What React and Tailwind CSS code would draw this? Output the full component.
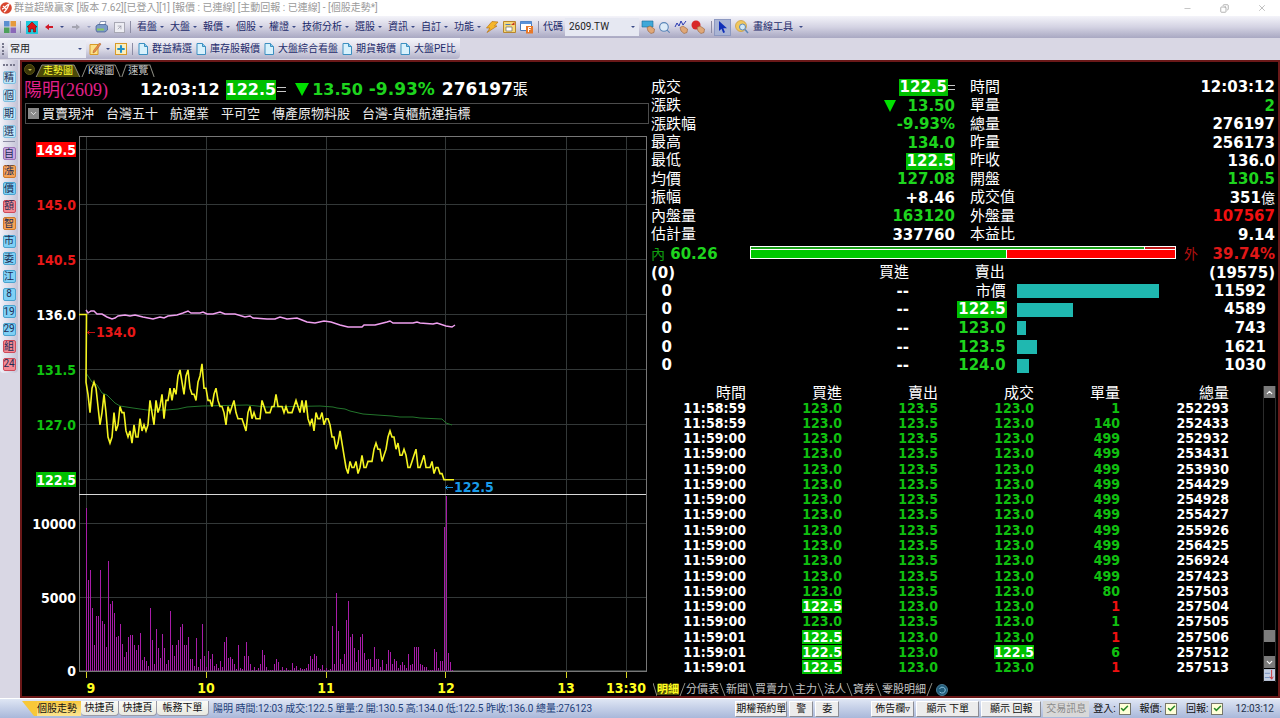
/**
 * App.jsx
 * ────────────────────────────────
 * Stock desktop: toolbars, intraday chart, quote panel, tick list.
 */

import {
  ArrowRight,
  Check,
  ChevronDown,
  ChevronUp,
  Copy,
  Minus,
  Plus,
  Search,
  X,
} from 'lucide-react'

const UI = "font-['Roboto','Noto_Sans_CJK_TC',sans-serif]"
const WIDE = "font-['DejaVu_Sans','Noto_Sans_CJK_TC',sans-serif] font-bold"
const NARROW = "font-['DejaVu_Sans_Condensed','Noto_Sans_CJK_TC',sans-serif] font-bold"
const HIT = 'bg-[#00c000] text-white'

/* ── Data ─────────────────────────────────────────────── */

// one price per minute from 09:00
const PRICES = [
  130.5, 129.5, 128, 130, 130.5, 130, 128.5, 127, 128, 129.5, 128, 126, 125.5, 126, 128, 126.5, 127, 128.5, 128, 128,
  126.5, 126, 126.5, 125.5, 127, 126, 126, 127.5, 126.5, 127, 126.5, 127, 129, 128, 127, 129, 128, 128.5, 129.5, 127.5,
  129, 129, 130, 129, 130, 129.5, 131, 131.5, 130.5, 129.5, 131, 131.5, 130, 129.5, 129.5, 129, 130.5, 131, 132, 130,
  130, 129, 129, 128.5, 129.5, 130, 129, 128.5, 128.5, 128, 127, 128.5, 128, 128.5, 129, 128, 127.5, 127.5, 127.5, 127,
  126.5, 128, 128.5, 127.5, 128, 127.5, 127.5, 127.5, 129, 128.5, 128, 128, 128, 128.5, 128.5, 129.5, 128.5, 128.5, 128.5, 128,
  128.5, 128, 128, 128, 128.5, 129, 128.5, 128, 129, 128, 129, 127.5, 127, 127.5, 126.5, 128, 127.5, 127.5, 128, 127,
  127.5, 127.5, 127, 126, 126, 125, 125.5, 126.5, 125.5, 124.5, 123.5, 123, 124, 123.5, 123.5, 124, 123, 123.5, 124.5, 123.5,
  123.5, 124, 124, 124, 125, 125.5, 125, 125, 124, 124.5, 125, 126, 126.5, 126, 126, 125, 125.5, 124.5, 124.5, 125,
  124.5, 123.5, 123.5, 124, 124.5, 125, 123.5, 123.5, 124, 124.5, 123.5, 123.5, 123.5, 124, 123, 123.5, 123.5, 123, 123, 122.5,
  122.5, 122.5, 122.5, 122.5, 122.5,
]

const VOLUMES = [
  11100, 6200, 6900, 4300, 1800, 3750, 3750, 6900, 3400, 3200, 1650, 7500, 4550, 4800, 3950, 2350, 2400, 3200, 1850, 950,
  1300, 2300, 2450, 2450, 1800, 1400, 1800, 2600, 750, 950, 700, 350, 4300, 2100, 500, 2900, 1600, 900, 2550, 1600,
  500, 750, 4100, 1750, 1000, 1800, 2100, 3000, 3200, 1800, 1800, 2300, 800, 800, 350, 2250, 300, 850, 3200, 1000,
  300, 1350, 850, 1150, 350, 500, 200, 700, 300, 1950, 2350, 900, 930, 800, 450, 150, 1750, 200, 150, 1000,
  2000, 1000, 450, 100, 250, 100, 200, 450, 1400, 1100, 300, 80, 80, 100, 500, 800, 600, 80, 300, 80,
  200, 100, 80, 550, 200, 350, 100, 200, 150, 150, 180, 450, 1000, 850, 1150, 1000, 200, 150, 400, 100,
  230, 100, 120, 3100, 450, 5330, 2700, 850, 500, 1150, 3500, 4800, 2300, 2550, 1600, 600, 1400, 2300, 2500, 1250,
  750, 800, 850, 300, 1650, 800, 800, 250, 750, 100, 450, 1450, 1300, 500, 800, 700, 200, 400, 600, 400,
  200, 1150, 400, 450, 1650, 1650, 1650, 500, 400, 250, 250, 80, 80, 100, 1500, 1300, 200, 700, 700, 9800,
  12000, 1250, 600, 100,
]

const INDEX_LINE =
  '86,310 88,313 91,311 94,311 97,314 102,314 107,317 112,319 115,318 118,316 125,315 130,316 135,315 143,317 153,319 160,317 164,318 168,316 177,315 183,313 188,311 191,313 200,313 203,312 207,314 213,314 220,312 225,314 235,314 245,317 250,316 253,318 267,319 275,319 280,317 287,319 297,318 302,320 307,322 315,323 324,321 331,322 340,325 348,327 362,327 364,325 375,325 387,322 390,321 393,323 413,323 417,322 420,323 433,324 437,323 446,326 452,327 455,325'

const AVERAGE_LINE =
  '86,373 92,382 97,385 102,393 107,395 115,403 120,406 133,408 147,410 167,410 178,409 187,407 202,406 247,405 267,407 320,406 333,407 337,408 345,409 350,411 363,414 377,415 392,416 400,417 413,417 420,418 442,419 446,423 452,425'

const QUOTE_LEFT = [
  { label: '成交', value: '122.5', hit: true, flat: true },
  { label: '漲跌', value: '13.50', tone: 'text-[#1ed41e]', down: true },
  { label: '漲跌幅', value: '-9.93%', tone: 'text-[#1ed41e]' },
  { label: '最高', value: '134.0', tone: 'text-[#1ed41e]' },
  { label: '最低', value: '122.5', hit: true },
  { label: '均價', value: '127.08', tone: 'text-[#1ed41e]' },
  { label: '振幅', value: '+8.46' },
  { label: '內盤量', value: '163120', tone: 'text-[#1ed41e]' },
  { label: '估計量', value: '337760' },
]

const QUOTE_RIGHT = [
  { label: '時間', value: '12:03:12' },
  { label: '單量', value: '2', tone: 'text-[#1ed41e]' },
  { label: '總量', value: '276197' },
  { label: '昨量', value: '256173' },
  { label: '昨收', value: '136.0' },
  { label: '開盤', value: '130.5', tone: 'text-[#1ed41e]' },
  { label: '成交值', value: '351', unit: '億' },
  { label: '外盤量', value: '107567', tone: 'text-[#f01010]' },
  { label: '本益比', value: '9.14' },
]

const ASKS = [
  { price: '市價', volume: 11592, tone: 'font-normal' },
  { price: '122.5', volume: 4589, tone: HIT },
  { price: '123.0', volume: 743, tone: 'text-[#1ed41e]' },
  { price: '123.5', volume: 1621, tone: 'text-[#1ed41e]' },
  { price: '124.0', volume: 1030, tone: 'text-[#1ed41e]' },
]

// time, bid, ask, deal, lot, total, lot is red
const TICKS = [
  ['11:58:59', '123.0', '123.5', '123.0', '1', '252293'],
  ['11:58:59', '123.0', '123.5', '123.0', '140', '252433'],
  ['11:59:00', '123.0', '123.5', '123.0', '499', '252932'],
  ['11:59:00', '123.0', '123.5', '123.0', '499', '253431'],
  ['11:59:00', '123.0', '123.5', '123.0', '499', '253930'],
  ['11:59:00', '123.0', '123.5', '123.0', '499', '254429'],
  ['11:59:00', '123.0', '123.5', '123.0', '499', '254928'],
  ['11:59:00', '123.0', '123.5', '123.0', '499', '255427'],
  ['11:59:00', '123.0', '123.5', '123.0', '499', '255926'],
  ['11:59:00', '123.0', '123.5', '123.0', '499', '256425'],
  ['11:59:00', '123.0', '123.5', '123.0', '499', '256924'],
  ['11:59:00', '123.0', '123.5', '123.0', '499', '257423'],
  ['11:59:00', '123.0', '123.5', '123.0', '80', '257503'],
  ['11:59:00', '122.5', '123.0', '123.0', '1', '257504', true],
  ['11:59:00', '123.0', '123.5', '123.0', '1', '257505'],
  ['11:59:01', '122.5', '123.0', '123.0', '1', '257506', true],
  ['11:59:01', '122.5', '123.0', '122.5', '6', '257512'],
  ['11:59:01', '122.5', '123.0', '123.0', '1', '257513', true],
]

const BLUE = 'bg-[#7fd0f5] border-[#4aa3cf]'
const PALE = 'bg-[#bfe6f8] border-[#7fbfe0]'
const RED = 'bg-[#f58a94] border-[#cf4a5a]'
const ORANGE = 'bg-[#f5a35a] border-[#cf7a2a]'
const PURPLE = 'bg-[#c9a8e0] border-[#9a72b8]'

const SIDE_TOP = ['精', '個', '期', '選']
const SIDE_BOTTOM = [
  ['自', PURPLE],
  ['漲', ORANGE],
  ['價', BLUE],
  ['額', RED],
  ['智', ORANGE],
  ['市', BLUE],
  ['委', BLUE],
  ['江', BLUE],
  ['8', BLUE],
  ['19', BLUE],
  ['29', BLUE],
  ['組', RED],
  ['24', RED],
]

/* ── Small parts ──────────────────────────────────────── */

function Caret({ className = '' }) {
  return (
    <svg viewBox="0 0 4 2" className={`w-1 h-[2px] shrink-0 ${className}`} fill="#3b4a86">
      <path d="M0 0h4L2 2z" />
    </svg>
  )
}

function Divider() {
  return <span className="w-px h-3 bg-[#8c8ca4] shrink-0" />
}

function DocIcon() {
  return (
    <svg viewBox="0 0 10 12" className="w-[10px] h-3 shrink-0">
      <path d="M1 .5h5.500l3 3v8H1z" fill="#d8f1fc" stroke="#3c8fc0" />
      <path d="M6.500 .5v3h3" fill="#8accec" stroke="#3c8fc0" />
    </svg>
  )
}

function IconButton({ label, children, className = '' }) {
  return (
    <button type="button" aria-label={label} className={`flex items-center justify-center shrink-0 ${className}`}>
      {children}
    </button>
  )
}

function HandIcon({ children }) {
  return (
    <svg viewBox="0 0 14 14" className="w-[14px] h-[14px]">
      {children}
      <path d="M6 7.500l3-1.500 4.500 3-.5 3.500-3 1L7 11z" fill="#e0a878" stroke="#9a6236" strokeWidth=".6" />
    </svg>
  )
}

/* ── Bars at the top ──────────────────────────────────── */

function TitleBar() {
  return (
    <header className="flex items-center h-4 bg-white text-[#9a9a9a] text-[10px] leading-none">
      <svg viewBox="0 0 12 12" className="w-3 h-3 mr-[2px] shrink-0">
        <circle cx="6" cy="6" r="5.800" fill="#d8452e" />
        <path d="M2 7c2 0 4-4 7-5-1 3-2 6-5 8M3 4l3 3" stroke="#fff" strokeWidth="1.300" fill="none" />
      </svg>
      <h1 className="flex-1 whitespace-pre">群益超級贏家 [版本 7.62][已登入][1] [報價 : 已連線] [主動回報 : 已連線] - [個股走勢*]</h1>
      <div className="flex items-center gap-7 pr-[13px]">
        <IconButton label="最小化"><Minus size={9} strokeWidth={1.5} /></IconButton>
        <IconButton label="還原"><Copy size={9} strokeWidth={2} className="-scale-x-100" /></IconButton>
        <IconButton label="關閉"><X size={10} strokeWidth={1.5} /></IconButton>
      </div>
    </header>
  )
}

function MainToolbar() {
  const menus = ['看盤', '大盤', '報價', '個股', '權證', '技術分析', '選股', '資訊', '自訂', '功能']
  return (
    <nav className="flex items-center h-[22px] pl-1 bg-linear-to-b from-[#f4f4fa] via-[#d4d3e3] to-[#a9a8c2] text-[#1d2b6b] text-[10px] leading-none">
      <svg viewBox="0 0 12 12" className="w-3 h-3 shrink-0">
        <path d="M0 0h5.500v5.500H0z" fill="#5b8fd0" />
        <path d="M6.500 0H12v5.500H6.500z" fill="#e59a3c" />
        <path d="M0 6.500h5.500V12H0z" fill="#4da05a" />
        <path d="M6.500 6.500H12V12H6.500z" fill="#8a68b8" />
      </svg>
      <span className="w-1" />
      <Divider />
      <IconButton label="首頁" className="w-3 h-[13px] ml-[5px] bg-[#1fc8dc]">
        <svg viewBox="0 0 12 12" className="w-3 h-3">
          <path d="M6 1l5 5H9.500v5h-2V8h-3v3h-2V6H1z" fill="#e01414" stroke="#7a0808" strokeWidth=".6" />
        </svg>
      </IconButton>
      <IconButton label="上一頁" className="ml-[7px]">
        <svg viewBox="0 0 8 6" className="w-2 h-[6px]" fill="#d01828"><path d="M0 3l4-3v2h4v2H4v2z" /></svg>
      </IconButton>
      <Caret className="ml-[7px]" />
      <IconButton label="下一頁" className="ml-2">
        <svg viewBox="0 0 8 6" className="w-2 h-[6px]" fill="#a4a4b0"><path d="M8 3L4 0v2H0v2h4v2z" /></svg>
      </IconButton>
      <Caret className="ml-[7px] opacity-40" />
      <IconButton label="列印" className="ml-1">
        <svg viewBox="0 0 13 12" className="w-[13px] h-3">
          <path d="M4 4l1.500-3.500H11L9.500 4.500z" fill="#fff" stroke="#5a6f9a" strokeWidth=".7" />
          <path d="M1 5l2-1.500h8L12.500 5v4L10 11H2L1 9z" fill="#7c9cc8" stroke="#3f5a8c" strokeWidth=".7" />
          <path d="M2 7.500h7v2H2z" fill="#8cc860" />
        </svg>
      </IconButton>
      <IconButton label="開啟視窗" className="ml-[6px] w-[11px] h-[11px] border border-[#a8a8b4] bg-[#ededf3]">
        <ArrowRight size={7} stroke="#8a8a98" className="-rotate-45" />
      </IconButton>
      <span className="w-[5px]" />
      <Divider />
      <div className="flex items-center gap-[6px] ml-[6px]">
        {menus.map((m) => (
          <button key={m} type="button" className="flex items-center gap-[3px] whitespace-nowrap">
            {m}
            <Caret />
          </button>
        ))}
      </div>
      <div className="flex items-center gap-1 ml-1">
        <IconButton label="閃電下單">
          <svg viewBox="0 0 14 12" className="w-[14px] h-3">
            <path d="M7 .5L13 1 9.500 5H12L2 11.500 5 7H1.500z" fill="#f5b62a" stroke="#b87414" strokeWidth=".7" />
          </svg>
        </IconButton>
        <IconButton label="下單">
          <svg viewBox="0 0 13 12" className="w-[13px] h-3">
            <path d="M.5 .5h12v11H.5z" fill="#f5d878" stroke="#b8862c" />
            <path d="M3 6h6v4H3z" fill="#fff" stroke="#6a6a6a" strokeWidth=".7" />
            <path d="M2.500 3.500h5" stroke="#4a78b8" />
            <path d="M8 4l3.500-3v3z" fill="#c83820" />
          </svg>
        </IconButton>
        <IconButton label="期貨視窗">
          <svg viewBox="0 0 14 13" className="w-[14px] h-[13px]">
            <path d="M.5.5h11v9H.5z" fill="#fff" stroke="#4a7ab8" />
            <path d="M.5.5h11v2.500H.5z" fill="#5b93d8" />
            <path d="M6 5h7v7.500H6z" fill="#e87828" />
            <path d="M11 6.500H8.500v4.500M8.500 8.500h2" stroke="#fff" fill="none" />
          </svg>
        </IconButton>
      </div>
      <span className="w-1" />
      <Divider />
      <label htmlFor="symbol" className="ml-1 mr-[2px] whitespace-nowrap">代碼</label>
      <div className="relative flex items-center">
        <select id="symbol" className="appearance-none w-[74px] h-[18px] pl-1 bg-[#e6e8f2] text-[#222] text-[10px] leading-none">
          <option>2609.TW</option>
        </select>
        <Caret className="absolute right-1 pointer-events-none" />
      </div>
      <div className="flex items-center gap-[3px] ml-[2px]">
        <IconButton label="報價查詢">
          <HandIcon><path d="M1 1h11v6H1z" fill="#3fa8d8" stroke="#1a6a98" strokeWidth=".6" /></HandIcon>
        </IconButton>
        <IconButton label="搜尋"><Search size={13} stroke="#5a86b8" fill="#dcebf8" /></IconButton>
        <IconButton label="走勢">
          <HandIcon><path d="M1 7l2-4 2 3 2-5 2 4 3-4" stroke="#2838b0" fill="none" /></HandIcon>
        </IconButton>
        <IconButton label="警示">
          <HandIcon><circle cx="5" cy="5" r="4.500" fill="#d82828" /></HandIcon>
        </IconButton>
      </div>
      <span className="w-[6px]" />
      <Divider />
      <IconButton label="選取" className="w-[17px] h-[17px] ml-[2px] bg-[#a9b4d4] border border-[#8c98c0]">
        <svg viewBox="0 0 8 12" className="w-2 h-3" fill="#1030b8">
          <path d="M0 0v10l2.500-2.300L4.200 12l1.800-.8L4.300 7.200H8z" />
        </svg>
      </IconButton>
      <IconButton label="畫線搜尋" className="mx-1">
        <svg viewBox="0 0 14 14" className="w-[14px] h-[14px]">
          <circle cx="6" cy="6" r="5.500" fill="#f0c860" stroke="#c89838" strokeWidth=".7" />
          <circle cx="7.500" cy="7" r="3" fill="#cfe8f8" stroke="#5a86b8" />
          <path d="M10 9.500l3 3.500" stroke="#5a86b8" strokeWidth="1.500" />
        </svg>
      </IconButton>
      <button type="button" className="flex items-center gap-[6px] whitespace-nowrap">
        畫線工具
        <Caret />
      </button>
    </nav>
  )
}

function FavoriteToolbar() {
  const pages = ['群益精選', '庫存股報價', '大盤綜合看盤', '期貨報價', '大盤PE比']
  return (
    <nav className="flex h-[22px] bg-[#d9d7e4] text-[#1d2b6b] text-[10px] leading-none">
      <div className="flex items-center h-[21px] pl-[2px] pr-1 rounded-br bg-linear-to-b from-[#f4f4fa] via-[#dedde9] to-[#b1b0c8]">
        <span className="h-3 border-l-2 border-dotted border-[#77778c] mr-1" />
        <div className="relative flex items-center">
          <select aria-label="群組" className="appearance-none w-[78px] h-[18px] pl-[2px] bg-[#e9ebf3] text-[#222] text-[10px] leading-none">
            <option>常用</option>
          </select>
          <Caret className="absolute right-1 pointer-events-none" />
        </div>
        <IconButton label="編輯" className="ml-[3px]">
          <svg viewBox="0 0 13 12" className="w-[13px] h-3">
            <path d="M1 1.500h8v10H1z" fill="#fbe088" stroke="#d89a28" />
            <path d="M12 1L6 9l-2 1 .5-2.500L10.500 0z" fill="#e88a4a" stroke="#a85a20" strokeWidth=".5" />
          </svg>
        </IconButton>
        <Caret className="ml-1" />
        <IconButton label="新增" className="ml-[5px] w-3 h-3 border border-[#d89a28] bg-[#fbeebc]">
          <Plus size={10} strokeWidth={5} stroke="#2090c8" />
        </IconButton>
        <span className="w-[5px]" />
        <Divider />
        <div className="flex items-center gap-1 ml-[5px]">
          {pages.map((p) => (
            <button key={p} type="button" className="flex items-center gap-1 whitespace-nowrap">
              <DocIcon />
              {p}
            </button>
          ))}
        </div>
      </div>
    </nav>
  )
}

function Sidebar() {
  const key = 'flex items-center justify-center w-[13px] h-[13px] rounded-[2px] border text-[10px] leading-none text-[#1c2c54]'
  return (
    <aside className="w-5 shrink-0">
      <div className="flex flex-col items-center w-[18px] pt-1 pb-[2px] rounded-b bg-linear-to-r from-[#f2f2f9] to-[#c4c3d6]">
        <span className="w-3 border-t-2 border-dotted border-[#77778c]" />
        <div className="flex flex-col gap-[5px] mt-[5px]">
          {SIDE_TOP.map((t) => (
            <button key={t} type="button" className={`${key} ${PALE}`}>{t}</button>
          ))}
        </div>
        <hr className="w-3 my-[3px] border-[#8c8ca4]" />
        <div className="flex flex-col justify-between h-[224px] mt-[2px]">
          {SIDE_BOTTOM.map(([t, tone]) => (
            <button key={t} type="button" className={`${key} ${tone}`}>{t}</button>
          ))}
        </div>
      </div>
    </aside>
  )
}

/* ── Chart side ───────────────────────────────────────── */

function ChartTabs() {
  return (
    <div className="flex items-end h-[15px] pl-[2px] text-[10px] leading-none" role="tablist">
      <IconButton label="選單" className="w-[11px] h-[11px] mb-[2px] rounded-full bg-[#3a3608] border border-[#5a5414]">
        <svg viewBox="0 0 4 2" className="w-1 h-[2px]" fill="#c8c050"><path d="M0 0h4L2 2z" /></svg>
      </IconButton>
      {[
        ['走勢圖', true],
        ['K線圖', false],
        ['速覽', false],
      ].map(([t, on]) => (
        <button
          key={t}
          type="button"
          role="tab"
          aria-selected={on}
          className={`relative h-[13px] ${on ? 'px-2 text-[#ffff30]' : 'px-[7px] text-[#c8c8c8]'}`}
        >
          <svg viewBox="0 0 40 13" preserveAspectRatio="none" className="absolute inset-0 w-full h-full">
            <path d="M1 13L6 1h28l5 12" fill={on ? '#4c4a08' : 'none'} stroke="#8a8a80" vectorEffect="non-scaling-stroke" />
          </svg>
          <span className="relative">{t}</span>
        </button>
      ))}
    </div>
  )
}

function StockHeader() {
  return (
    <div className={`flex items-center h-6 pt-px pl-[2px] whitespace-nowrap text-base leading-none text-white ${WIDE}`}>
      <h2 className="w-[116px] font-['Liberation_Serif','Noto_Sans_CJK_TC',serif] font-normal text-lg leading-none text-[#e0218a]">
        陽明(2609)
      </h2>
      <span>12:03:12</span>
      <span className={`ml-[6px] py-[2px] ${HIT}`}>122.5</span>
      <span className="w-[9px] h-[5px] ml-[1px] border-y border-[#c8c8c8]" />
      <svg viewBox="0 0 14 13" className="w-[14px] h-[13px] ml-[9px]" fill="#00e000">
        <path d="M0 0h14L7 13z" />
      </svg>
      <span className="ml-[3px] text-[#1ed41e]">13.50</span>
      <span className="ml-[6px] text-[17px] leading-none text-[#1ed41e]">-9.93%</span>
      <span className="ml-[7px] text-[17px] leading-none">276197</span>
      <span className="font-normal text-[15px] leading-none">張</span>
    </div>
  )
}

function Concepts() {
  const tags = ['買賣現沖', '台灣五十', '航運業', '平可空', '傳產原物料股', '台灣-貨櫃航運指標']
  return (
    <div className="flex items-center gap-3 h-[21px] ml-[3px] mr-[1px] mt-[2px] border border-[#4c4c4c] text-[13px] leading-none text-[#ececec] whitespace-nowrap font-['Liberation_Serif','Noto_Sans_CJK_TC',serif]">
      <IconButton label="展開" className="w-[11px] h-[11px] ml-[2px] mr-[-9px] bg-[#8a8a8a]">
        <ChevronDown size={9} stroke="#fff" />
      </IconButton>
      {tags.map((t) => (
        <span key={t}>{t}</span>
      ))}
    </div>
  )
}

const xOf = (minute) => 86 + minute * 2
const yOf = (price) => 315 + (136 - price) * 12.2
const volY = (v) => 671 - v * 0.01465

function IntradayChart() {
  const line = PRICES.map((p, i) => `${xOf(i)},${yOf(p).toFixed(1)}`).join(' ')
  const axis = [
    ['149.5', 150, '#fff', '#ff0000'],
    ['145.0', 205, '#e81818'],
    ['140.5', 260, '#e81818'],
    ['136.0', 315, '#fff'],
    ['131.5', 370, '#10c010'],
    ['127.0', 425, '#10c010'],
    ['122.5', 480, '#fff', '#00c000'],
    ['10000', 524, '#fff'],
    ['5000', 598, '#fff'],
    ['0', 671, '#fff'],
  ]
  const hours = [
    ['9', 86, 91],
    ['10', 206, 206],
    ['11', 326, 326],
    ['12', 445, 446],
    ['13', 566, 566],
    ['13:30', 626, 626],
  ]
  return (
    <svg viewBox="22 124 628 571" className={`w-full h-auto text-[14px] ${NARROW}`} role="img" aria-label="陽明 走勢圖">
      <g stroke="#333838" shapeRendering="crispEdges">
        {axis.map(([t, y]) => (
          <path key={t} d={`M79.500 ${y - 0.5}H646`} />
        ))}
        {hours.map(([t, x]) => (
          <path key={t} d={`M${x + 0.5} 136V671`} />
        ))}
      </g>
      <g fill="#a81ca8" shapeRendering="crispEdges">
        {VOLUMES.map((v, i) => (
          <rect key={i} x={xOf(i)} y={Math.max(volY(v), 496)} width="1" height={671 - Math.max(volY(v), 496)} />
        ))}
      </g>
      <path d="M79.500 671V136.500H646.500V671.500H79" fill="none" stroke="#777" shapeRendering="crispEdges" />
      <path d="M79 494.500H646" stroke="#d8d8d8" strokeWidth="1" shapeRendering="crispEdges" />
      {axis.map(([t, y, color, box]) => (
        <g key={t}>
          {box && <rect x="36" y={y - 8} width="40" height="15" fill={box} />}
          <text x="76" y={y + 5} textAnchor="end" fill={color}>{t}</text>
        </g>
      ))}
      {hours.map(([t, x, tx]) => (
        <g key={t}>
          <path d={`M${x + 0.5} 672v6`} stroke="#d8d820" shapeRendering="crispEdges" />
          <text x={tx} y="693" textAnchor="middle" fill="#ffff20">{t}</text>
        </g>
      ))}
      <polyline points={AVERAGE_LINE} fill="none" stroke="#23752c" />
      <polyline points={INDEX_LINE} fill="none" stroke="#f0a0f0" strokeWidth="1.500" />
      <polyline points={`79,314.500 86.500,314.500 ${line}`} fill="none" stroke="#f4f420" strokeWidth="1.600" />
      <path d="M87 332.500h8M89.500 330.500l-2 2 2 2" stroke="#c01010" fill="none" />
      <text x="96" y="337" fill="#e81818">134.0</text>
      <path d="M445 487.500h8M447.500 485.500l-2 2 2 2" stroke="#1a90d8" fill="none" />
      <text x="454" y="492" fill="#1a9be8">122.5</text>
    </svg>
  )
}

/* ── Quote side ───────────────────────────────────────── */

function QuoteColumn({ rows, className = '' }) {
  return (
    <dl className={`grid auto-rows-fr h-[166px] ${className}`}>
      {rows.map((r) => (
        <div key={r.label} className="flex items-center justify-between">
          <dt className="font-normal">{r.label}</dt>
          <dd className={`flex items-center pt-px ${r.tone || ''}`}>
            {r.down && (
              <svg viewBox="0 0 12 12" className="w-3 h-3 mr-3" fill="#00e000">
                <path d="M0 0h12L6 12z" />
              </svg>
            )}
            <span className={r.hit ? `px-px ${HIT}` : ''}>{r.value}</span>
            {r.unit && <span className="font-normal text-[14px] leading-none">{r.unit}</span>}
            {r.flat && <span className="w-[7px] h-[5px] border-y border-[#c8c8c8]" />}
          </dd>
        </div>
      ))}
    </dl>
  )
}

function InOutBar() {
  return (
    <div className="flex items-center h-5">
      <span className="w-[99px] shrink-0 text-[#1ed41e]">
        <span className="font-normal text-[14px] text-[#10a010]">內</span> 60.26
      </span>
      <div className="flex flex-col flex-1 h-[13px] -mt-1 border border-white">
        <div className="flex h-[3px] border-b border-white">
          <span className="w-[93%] bg-[#18a018] border-r border-white" />
          <span className="flex-1 bg-[#c01818]" />
        </div>
        <div className="flex flex-1">
          <span className="w-[60.26%] bg-[#00c800] border-r border-white" />
          <span className="flex-1 bg-[#ff0000]" />
        </div>
      </div>
      <span className="flex justify-between w-[99px] pl-2 shrink-0 text-[#e01818]">
        <span className="font-normal text-[14px] text-[#b01010]">外</span>39.74%
      </span>
    </div>
  )
}

function Depth() {
  const max = ASKS[0].volume
  return (
    <table className="w-full table-fixed border-collapse text-right h-[111px]">
      <colgroup>
        <col className="w-[5%]" />
        <col className="w-[37%]" />
        <col className="w-[15%]" />
        <col className="w-[152px]" />
        <col />
      </colgroup>
      <thead>
        <tr className="h-[18px]">
          <th className="text-left font-bold">(0)</th>
          <th className="font-normal pb-px pr-1">買進</th>
          <th className="font-normal pb-px pr-[2px]">賣出</th>
          <th colSpan="2" className="font-bold">(19575)</th>
        </tr>
      </thead>
      <tbody>
        {ASKS.map((a) => (
          <tr key={a.price}>
            <td className="text-center">0</td>
            <td className="pr-1">--</td>
            <td><span className={`inline-block px-px ${a.tone}`}>{a.price}</span></td>
            <td className="pl-[10px]">
              <div className="h-[14px] bg-[#1fb8b0]" style={{ width: `${(a.volume / max) * 100}%` }} />
            </td>
            <td className="pr-[9px]">{a.volume}</td>
          </tr>
        ))}
      </tbody>
    </table>
  )
}

function TickList() {
  const cols = [
    ['時間', 'w-[96px]'],
    ['買進', 'w-[96px]'],
    ['賣出', 'w-[96px]'],
    ['成交', 'w-[96px]'],
    ['單量', 'w-[86px]'],
    ['總量', 'w-[109px]'],
  ]
  return (
    <div className="flex justify-between mt-[11px]">
      <table className={`w-[579px] table-fixed border-collapse text-right h-[289px] text-[14px] leading-[14px] ${NARROW}`}>
        <thead>
          <tr>
            {cols.map(([c, w]) => (
              <th key={c} className={`${w} font-normal text-[15px] leading-[14px]`}>{c}</th>
            ))}
          </tr>
        </thead>
        <tbody>
          {TICKS.map(([time, bid, ask, deal, lot, total, red]) => (
            <tr key={total}>
              <td>{time}</td>
              {[bid, ask, deal].map((p, i) => (
                <td key={i} className="text-[#10c010]">
                  <span className={p === '122.5' ? `inline-block ${HIT}` : ''}>{p}</span>
                </td>
              ))}
              <td className={red ? 'text-[#f01010]' : 'text-[#10c010]'}>{lot}</td>
              <td>{total}</td>
            </tr>
          ))}
        </tbody>
      </table>
      <div className="flex flex-col w-[13px] mr-[2px] h-[296px] border-x border-[#2c2c2c]">
        <IconButton label="向上" className="h-3 bg-[#7a7a7a]"><ChevronUp size={9} strokeWidth={3} stroke="#fff" /></IconButton>
        <div className="flex-1" />
        <div className="h-3 bg-[#7c7c7c]" />
        <div className="h-[14px]" />
        <IconButton label="向下" className="h-3 bg-[#7a7a7a]"><ChevronDown size={9} strokeWidth={3} stroke="#fff" /></IconButton>
        <svg viewBox="0 0 13 14" className="h-[14px]">
          <path d="M0 0h13v14H0z" fill="#c4d0e4" />
          <path d="M1 5h6M1 10h6" stroke="#6a86b8" />
          <path d="M9 1v10M7 9l2 3 2-3" stroke="#d02020" fill="none" />
        </svg>
      </div>
    </div>
  )
}

function DetailTabs() {
  const tabs = ['明細', '分價表', '新聞', '買賣力', '主力', '法人', '資券', '零股明細']
  return (
    <div className="flex items-center h-[13px] pl-[3px] text-[11px] leading-none whitespace-nowrap font-normal" role="tablist">
      {tabs.map((t, i) => (
        <button
          key={t}
          type="button"
          role="tab"
          aria-selected={i === 0}
          className={`flex items-center h-[13px] ${i === 0 ? 'font-bold text-[#ffff20]' : 'text-[#c4c4c4]'}`}
        >
          {i === 0 && (
            <svg viewBox="0 0 4 13" className="w-1 h-[13px]"><path d="M0 0l4 13" stroke="#8a8a80" /></svg>
          )}
          <span className={i === 0 ? 'bg-[#4c4a08]' : ''}>{t}</span>
          <svg viewBox="0 0 7 13" className="w-[7px] h-[13px]"><path d={i === 0 || i === 7 ? 'M6 0L1 13' : 'M1 0l5 13'} stroke="#8a8a80" /></svg>
        </button>
      ))}
      <svg viewBox="0 0 12 12" className="w-3 h-3 ml-[3px]">
        <circle cx="6" cy="6" r="5.500" fill="#1f5a78" stroke="#4a7a94" />
        <path d="M3.500 5a3 3 0 1 1 2 4M3.500 8l2 1" stroke="#8ac0dc" fill="none" />
      </svg>
    </div>
  )
}

/* ── Status bar ───────────────────────────────────────── */

function StatusCheck({ label }) {
  return (
    <label className="flex items-center gap-[3px] text-[#111]">
      {label}
      <span className="relative flex items-center justify-center">
        <input type="checkbox" defaultChecked className="appearance-none w-3 h-3 bg-[#ffffd8] border border-[#77776a]" />
        <Check size={9} strokeWidth={4} stroke="#2a8a2a" className="absolute pointer-events-none" />
      </span>
    </label>
  )
}

function StatusBar() {
  const tab = 'h-[15px] rounded-b border-r border-b border-[#9a9aa8] bg-linear-to-b from-[#fbfbf6] to-[#e8e8e0] text-[#111]'
  const btn = 'h-4 border border-t-white border-l-white border-r-[#8c8c94] border-b-[#8c8c94] bg-[#ececec] text-[#111]'
  return (
    <footer className="flex items-center h-5 border-t border-[#fff] bg-linear-to-b from-[#dfe6f4] to-[#a9b8da] text-[10px] leading-none whitespace-nowrap">
      <svg viewBox="0 0 16 15" className="w-4 h-[15px] ml-[22px] -mr-px shrink-0"><path d="M0 0h16v15h-4z" fill="#f8c838" /></svg>
      <button type="button" className="h-[15px] pr-1 bg-linear-to-b from-[#f8c838] to-[#fbe490] text-[#111]">個股走勢</button>
      <button type="button" className={`${tab} w-[38px]`}>快捷頁</button>
      <button type="button" className={`${tab} w-[38px]`}>快捷頁</button>
      <button type="button" className={`${tab} w-[52px]`}>帳務下單</button>
      <p className="flex-1 ml-1 text-[#22407a]">
        陽明 時間:12:03 成交:122.5 單量:2 開:130.5 高:134.0 低:122.5 昨收:136.0 總量:276123
      </p>
      <div className="flex gap-[2px]">
        <button type="button" className={`${btn} w-[52px]`}>期權預約單</button>
        <button type="button" className={`${btn} w-6`}>警</button>
        <button type="button" className={`${btn} w-6`}>委</button>
      </div>
      <div className="flex gap-[2px] ml-8">
        <button type="button" className={`${btn} w-[43px]`}>佈告欄▿</button>
        <button type="button" className={`${btn} w-[63px]`}>顯示 下單</button>
        <button type="button" className={`${btn} w-[60px]`}>顯示 回報</button>
        <button type="button" disabled className="h-4 w-[46px] bg-[#d8d8d8] text-[#8a8a8a]">交易訊息</button>
      </div>
      <div className="flex gap-[9px] ml-1">
        <StatusCheck label="登入:" />
        <StatusCheck label="報價:" />
        <StatusCheck label="回報:" />
      </div>
      <time className="ml-3 mr-[6px] text-[#22304a]">12:03:12</time>
    </footer>
  )
}

export default function App() {
  return (
    <div lang="zh-Hant" className={`flex flex-col min-h-screen bg-[#d9d7e4] ${UI}`}>
      <TitleBar />
      <MainToolbar />
      <FavoriteToolbar />
      <div className="flex flex-1">
        <Sidebar />
        <main className="grid grid-cols-2 flex-1 border-2 border-[#6a1818] bg-black text-white">
          <section className="flex flex-col min-w-0">
            <ChartTabs />
            <StockHeader />
            <Concepts />
            <IntradayChart />
          </section>
          <section className={`flex flex-col min-w-0 pt-4 text-[15px] leading-[17px] ${WIDE}`}>
            <div className="grid grid-cols-2 pl-px pr-[3px]">
              <QuoteColumn rows={QUOTE_LEFT} className="pr-2" />
              <QuoteColumn rows={QUOTE_RIGHT} className="pl-[7px]" />
            </div>
            <div className="pl-px pr-[3px]">
              <InOutBar />
              <Depth />
            </div>
            <TickList />
            <div className="mt-auto">
              <DetailTabs />
            </div>
          </section>
        </main>
      </div>
      <StatusBar />
    </div>
  )
}
